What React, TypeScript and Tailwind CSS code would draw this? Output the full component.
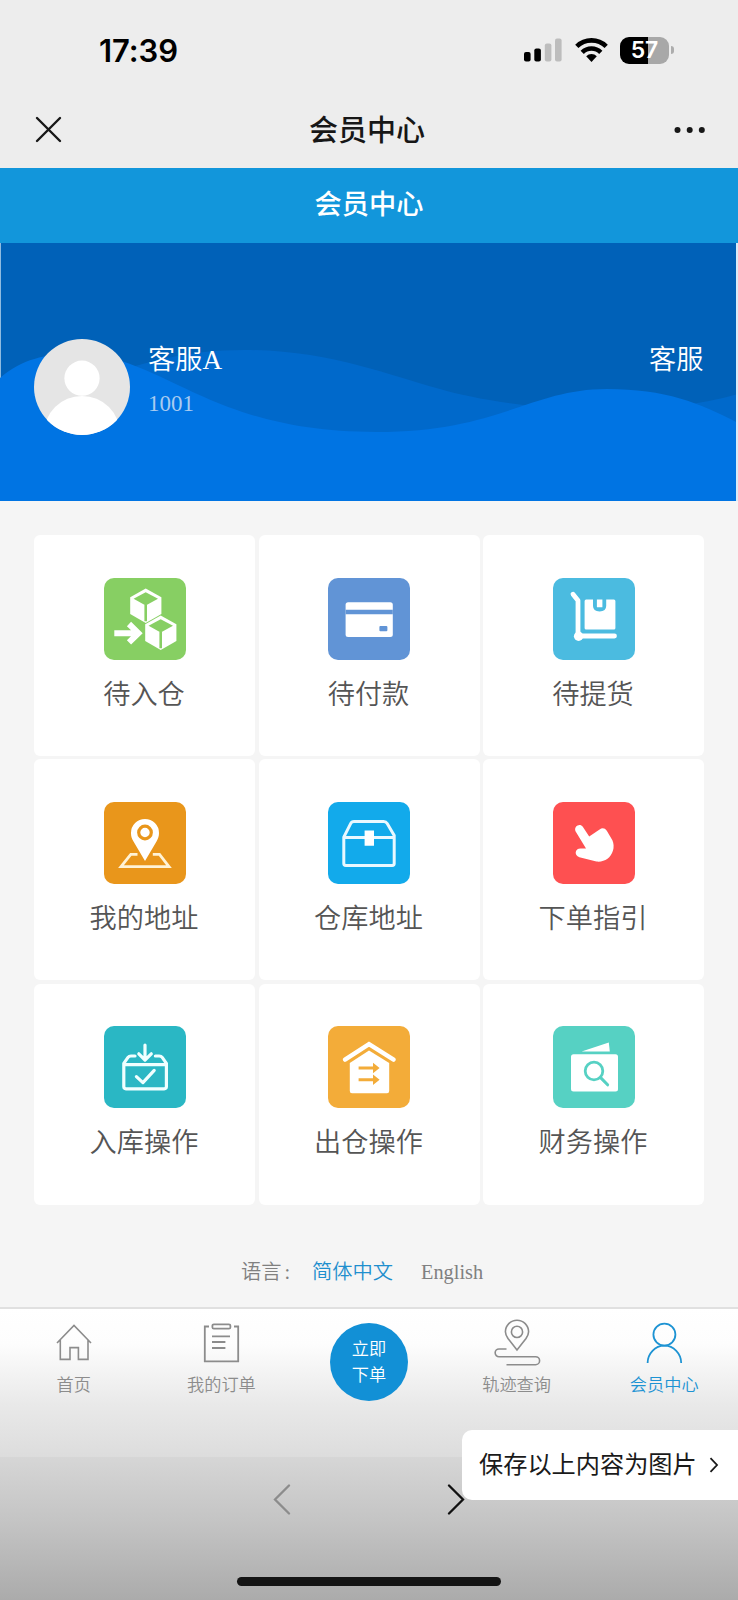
import React from "react"

interface IMenuItem {
    name: string,
    bg: string,
    icon: React.ReactNode
}

interface ITab {
    name: string,
    active?: boolean,
    children: React.ReactNode
}

const Cube = ({ bg }: { bg: string }) => (
    <>
        <path d="M41.7 10.5 57.4 19.3V36L41.7 45 26.2 36V19.3Z" fill="#fff" />
        <path d="M41.7 14.2 54 20.8 41.7 27.5 29.6 20.8Z" fill={bg} />
        <path d="M41.7 27V43.2" stroke={bg} strokeWidth="2.6" />
    </>
)

const menu: IMenuItem[] = [
    {
        name: "待入仓",
        bg: "bg-[#87cf63]",
        icon: (
            <>
                <Cube bg="#87cf63" />
                <g transform="translate(15 27)"><Cube bg="#87cf63" /></g>
                <path d="M10.3 55.2H35M25 46 34.4 55.2 25 64.4" stroke="#fff" strokeWidth="6" fill="none" />
            </>
        )
    },
    {
        name: "待付款",
        bg: "bg-[#6194d6]",
        icon: (
            <>
                <rect x="17.6" y="24.3" width="47.2" height="34.6" rx="2.5" fill="#fff" />
                <path d="M17.6 34H64.8" stroke="#6194d6" strokeWidth="4.6" />
                <rect x="51.4" y="48" width="8" height="5.2" rx="1" fill="#6194d6" />
            </>
        )
    },
    {
        name: "待提货",
        bg: "bg-[#4bbbe0]",
        icon: (
            <>
                <path d="M20 16.2 25 22.5V58H61.5" stroke="#fff" strokeWidth="4.8" strokeLinecap="round" strokeLinejoin="round" fill="none" />
                <circle cx="25.6" cy="58.3" r="4.7" fill="#fff" />
                <rect x="31.6" y="21.6" width="30.8" height="30" rx="1.5" fill="#fff" />
                <path d="M40 21V28Q40 33.4 46.6 33.4T53.2 28V21Z" fill="#4bbbe0" />
                <path d="M43.9 21.6H49.4V29.3H43.9Z" fill="#fff" />
            </>
        )
    },
    {
        name: "我的地址",
        bg: "bg-[#e9961b]",
        icon: (
            <>
                <path d="M33.5 52.3H26.8L17 64.7H65L55.5 52.3H48.8" stroke="#fff3d6" strokeWidth="2.8" fill="none" />
                <path d="M41 59 29.5 39.5C27.5 36.5 27 34 27 31a14 14 0 0 1 28 0c0 3-.8 5.5-2.5 8.5Z" fill="#fff" />
                <circle cx="41" cy="30.5" r="6.3" fill="#fff" stroke="#e9961b" strokeWidth="3.2" />
            </>
        )
    },
    {
        name: "仓库地址",
        bg: "bg-[#12aaeb]",
        icon: (
            <>
                <path d="M15.8 35.2 22.5 21.8Q23.6 19.6 26 19.6H55.6Q58 19.6 59.2 21.6L66.2 33.4V61.5Q66.2 63.4 64.2 63.4H17.8Q15.8 63.4 15.8 61.5ZM15.8 35.4H66.2" stroke="#e9f8ff" strokeWidth="3" fill="none" />
                <path d="M36.6 28.6H46V43.8H36.6Z" fill="#fff" />
            </>
        )
    },
    {
        name: "下单指引",
        bg: "bg-[#fe5051]",
        icon: (
            <path d="M22.5 29.2C20.6 24.6 26.8 20.6 29.8 24.8L36.2 34.4 46.6 27.4C49.4 25.6 52 26.2 53.8 28.8L59.4 38.2C60.8 41 61 45.6 60 48.6C57.6 56.4 51.4 60.4 43.4 59.6L26.4 55.2C20.8 53.4 21.8 46.4 27.8 46.6L33 46.4Z" fill="#fff" />
        )
    },
    {
        name: "入库操作",
        bg: "bg-[#2ab7c4]",
        icon: (
            <g stroke="#f0ffff" strokeWidth="3.2" strokeLinecap="round" strokeLinejoin="round" fill="none">
                <path d="M31 30H27Q25 30 24 31.4L19.8 37.4V60.6Q19.8 62.8 22 62.8H60.2Q62.4 62.8 62.4 60.6V37.4L58.2 31.4Q57.2 30 55.2 30H51.4M19.8 38.6H62.4" />
                <path d="M41 19V33.4M34.8 27.8 41 34 47.3 27.8" />
                <path d="M32.4 50.6 38.9 56.6 50.2 44.4" />
            </g>
        )
    },
    {
        name: "出仓操作",
        bg: "bg-[#f3ac39]",
        icon: (
            <>
                <path d="M17 33.6 41 18.2 65.6 33.6" stroke="#fff" strokeWidth="4.4" strokeLinecap="round" fill="none" />
                <path d="M41 24.4 61.2 37V65Q61.2 67.2 59 67.2H24Q21.8 67.2 21.8 65V37Z" fill="#fff" />
                <path d="M30.6 42H47M30.6 53.7H47" stroke="#f3ac39" strokeWidth="3" />
                <path d="M45 36.8 51.6 42 45 47.2ZM45 48.5 51.6 53.7 45 58.9Z" fill="#f3ac39" />
            </>
        )
    },
    {
        name: "财务操作",
        bg: "bg-[#56d1c3]",
        icon: (
            <>
                <path d="M28.6 25.4 55.8 16.6 56.8 25.4Z" fill="#fff" />
                <rect x="18" y="28.2" width="47" height="37.4" rx="2.5" fill="#fff" />
                <circle cx="41" cy="45" r="8.8" stroke="#56d1c3" strokeWidth="2.8" fill="none" />
                <path d="M47.6 51.6 54.6 58.8" stroke="#56d1c3" strokeWidth="3" strokeLinecap="round" />
            </>
        )
    }
]

const MenuCard: React.FC<IMenuItem> = ({ name, bg, icon }) => (
    <li className="flex h-[221px] flex-col items-center rounded-md bg-white pt-[42.5px]">
        <div className={"h-[82px] w-[82px] overflow-hidden rounded-[10px] " + bg}>
            <svg viewBox="0 0 82 82" className="h-full w-full">{icon}</svg>
        </div>
        <span className="mt-[15px] mr-px text-[27.2px] leading-10 font-[350] text-[#555]">{name}</span>
    </li>
)

const Tab: React.FC<ITab> = ({ name, active, children }) => (
    <a className={active ? "flex flex-col items-center text-[#1d93d3]" : "flex flex-col items-center text-[#8c8c8c]"}>
        <svg viewBox="0 0 48 48" className="mt-[9px] h-12 w-12" fill="none" stroke="currentColor" strokeWidth="1.6">{children}</svg>
        <span className="mt-2 text-[17.2px] leading-6 font-[350]">{name}</span>
    </a>
)

const StatusBar = () => (
    <div className="flex h-[92px] items-center justify-between pt-2 pr-[64px] pl-[99px]">
        <span className="font-['Inter'] text-[31px] leading-none font-semibold tracking-[-0.1px] text-black">17:39</span>
        <div className="flex items-center">
            <svg viewBox="0 0 38 24" className="h-6 w-[38px]">
                <rect x="0" y="14" width="6.6" height="9.6" rx="2" />
                <rect x="10.3" y="10.6" width="6.6" height="13" rx="2" />
                <rect x="20.8" y="5.6" width="6.6" height="18" rx="2" fill="#bdbdbd" />
                <rect x="31" y="0.4" width="6.6" height="23.2" rx="2" fill="#bdbdbd" />
            </svg>
            <svg viewBox="0 0 33 24" className="ml-[13px] h-6 w-[33px]" fill="none" stroke="#000" strokeWidth="4.6">
                <path d="M1.8 8.4A21 21 0 0 1 31.2 8.4" />
                <path d="M7.2 14.4A13.2 13.2 0 0 1 25.8 14.4" />
                <path d="M16.5 24 11.2 18.2A7.8 7.8 0 0 1 21.8 18.2Z" fill="#000" stroke="none" />
            </svg>
            <div className="ml-3 flex h-[27px] w-[49px] items-center justify-center rounded-[9px] bg-[linear-gradient(90deg,#000_57%,#a8a8a8_57%)] font-['Inter'] text-[23px] leading-none font-semibold text-white">57</div>
            <div className="ml-0.5 h-2 w-[3px] rounded-r-full bg-[#adadad]" />
        </div>
    </div>
)

const NavBar = () => (
    <div className="flex h-[76px] items-center justify-between pr-[33px] pl-[35px] text-[#171717]">
        <svg viewBox="0 0 27 27" className="mb-0.5 h-[27px] w-[27px]" stroke="currentColor" strokeWidth="2.4" strokeLinecap="round">
            <path d="M2 2 25 25M25 2 2 25" />
        </svg>
        <h1 className="mt-0.5 mr-0.5 text-[29px] leading-10 font-medium">会员中心</h1>
        <svg viewBox="0 0 31 8" className="h-2 w-[31px]" fill="currentColor">
            <circle cx="3.5" cy="4" r="3" />
            <circle cx="15.7" cy="4" r="3" />
            <circle cx="27.8" cy="4" r="3" />
        </svg>
    </div>
)

const Banner = () => (
    <section className="relative h-[258px] overflow-hidden">
        <svg viewBox="0 0 738 258" className="absolute inset-0 h-full w-full">
            <path d="M0 0H738V258H0Z" fill="#0061b8" />
            <path d="M100 258V133C150 119 185 107 245 107C330 107 390 133 440 146C500 164 640 180 738 151V258Z" fill="#0069cb" />
            <path d="M0 0H1V140H0Z" fill="#8fbbe0" />
            <path d="M0 135C22 116 45 111 75 111C165 111 205 189 376 189C500 189 530 146 607 146C665 146 700 160 738 180V258H0Z" fill="#0074e3" />
            <path d="M736 0H738V258H736Z" fill="#d9ebf8" />
        </svg>
        <div className="relative flex pt-24 pr-[34.5px] pl-[34px] text-white">
            <svg viewBox="0 0 97 97" className="h-24 w-24 rounded-full bg-[#e5e5e5]" fill="#fff">
                <circle cx="48.5" cy="39.6" r="17.8" />
                <circle cx="48.5" cy="96" r="38.5" />
            </svg>
            <div className="ml-[18px] flex-1">
                <div className="text-[27.2px] leading-[42px] font-[350]">客服<span className="font-normal">A</span></div>
                <div className="text-[23px] leading-[46px] text-[#a9cbf0]">1001</div>
            </div>
            <div className="text-[27.2px] leading-[42px] font-[350]">客服</div>
        </div>
    </section>
)

const App = () => {
    return (
        <div className="flex h-[1600px] w-[738px] flex-col overflow-hidden bg-[#f5f5f5] font-['Liberation_Serif','Noto_Sans_CJK_SC',sans-serif]">
            <header className="bg-[#ededed]">
                <StatusBar />
                <NavBar />
            </header>
            <div className="flex h-[75px] items-center justify-center bg-[#1296db] pb-px text-[27.2px] leading-10 font-medium text-white">会员中心</div>
            <Banner />

            <ul className="mx-[34px] mt-[34px] grid grid-cols-3 gap-x-[3.5px] gap-y-[3.3px]">
                {menu.map((item) => <MenuCard key={item.name} {...item} />)}
            </ul>

            <div className="flex h-[102px] items-center justify-center pt-[34px] pr-[14px] text-[20.3px] font-[350] text-[#808080]">
                <span className="w-[71px]">语言<span className="ml-[3px]">:</span></span>
                <span className="text-[#1f8fce]">简体中文</span>
                <span className="ml-7 font-normal">English</span>
            </div>

            <footer className="relative flex flex-1 flex-col">
                <div className="grid h-[150px] grid-cols-5 border-t-2 border-[#e0e0e0] bg-[linear-gradient(180deg,#fff_0,#fdfdfd_35px,#e9e9e9_95px,#dcdcdc_150px)]">
                    <Tab name="首页">
                        <path d="M7 25 24 7.5 41 25M10.3 22V41.4H20V29.6H28.4V41.4H38V22" />
                    </Tab>
                    <Tab name="我的订单">
                        <path d="M12 8.5H7.8V43.4H41.2V8.5H37" strokeWidth="1.8" />
                        <rect x="15.4" y="6.3" width="18" height="4.4" rx="1.5" strokeWidth="1.8" />
                        <path d="M15 18.4H33M15 24H28.4M15 30H28.4" strokeWidth="1.8" />
                    </Tab>
                    <div className="flex justify-center">
                        <button className="mt-[14px] flex h-[78px] w-[78px] flex-col items-center justify-center rounded-full bg-[#1290d6] pt-[3px] text-[17.2px] leading-[26px] font-[350] text-white">
                            <span>立即</span>
                            <span>下单</span>
                        </button>
                    </div>
                    <Tab name="轨迹查询">
                        <path d="M24 32 15 20.5C13 17.5 12.4 16 12.4 13.8a11.6 11.6 0 0 1 23.2 0c0 2.2-.6 3.7-2.6 6.7Z" />
                        <circle cx="24" cy="13.9" r="5.6" />
                        <path d="M13.5 31H6a3.8 3.8 0 0 0 0 7.7H42.6a4 4 0 0 1 0 8H13.5" />
                    </Tab>
                    <Tab name="会员中心" active>
                        <circle cx="24.4" cy="16.6" r="11" strokeWidth="1.8" />
                        <path d="M7.6 45a16.8 17.3 0 0 1 33.6 0" strokeWidth="1.8" />
                    </Tab>
                </div>
                <div className="flex flex-1 flex-col items-center bg-[linear-gradient(180deg,#d6d6d6,#c4c4c4_45%,#ababab)]">
                    <div className="mt-[26px] flex w-[192px] justify-between">
                        <svg viewBox="0 0 18 32" className="h-8 w-[18px]" fill="none" stroke="#8c8c8c" strokeWidth="2.3" strokeLinecap="round">
                            <path d="M16 2.5 2 16.5 16 30.5" />
                        </svg>
                        <svg viewBox="0 0 18 32" className="h-8 w-[18px]" fill="none" stroke="#111" strokeWidth="2.3" strokeLinecap="round">
                            <path d="M2 2.5 16 16.5 2 30.5" />
                        </svg>
                    </div>
                    <div className="mt-auto mb-[14px] h-[9px] w-[264px] rounded-full bg-[#141414]" />
                </div>
                <button className="absolute top-[123px] right-0 flex h-[70px] w-[276px] items-center rounded-l-[10px] bg-white pt-0.5 pl-[17px] text-[24.2px] text-[#1a1a1a]">
                    保存以上内容为图片
                    <svg viewBox="0 0 10 16" className="mb-0.5 ml-3 h-4 w-2.5" fill="none" stroke="currentColor" strokeWidth="1.8">
                        <path d="M1.5 1.2 8 8 1.5 14.8" />
                    </svg>
                </button>
            </footer>
        </div>
    )
}

export default App
